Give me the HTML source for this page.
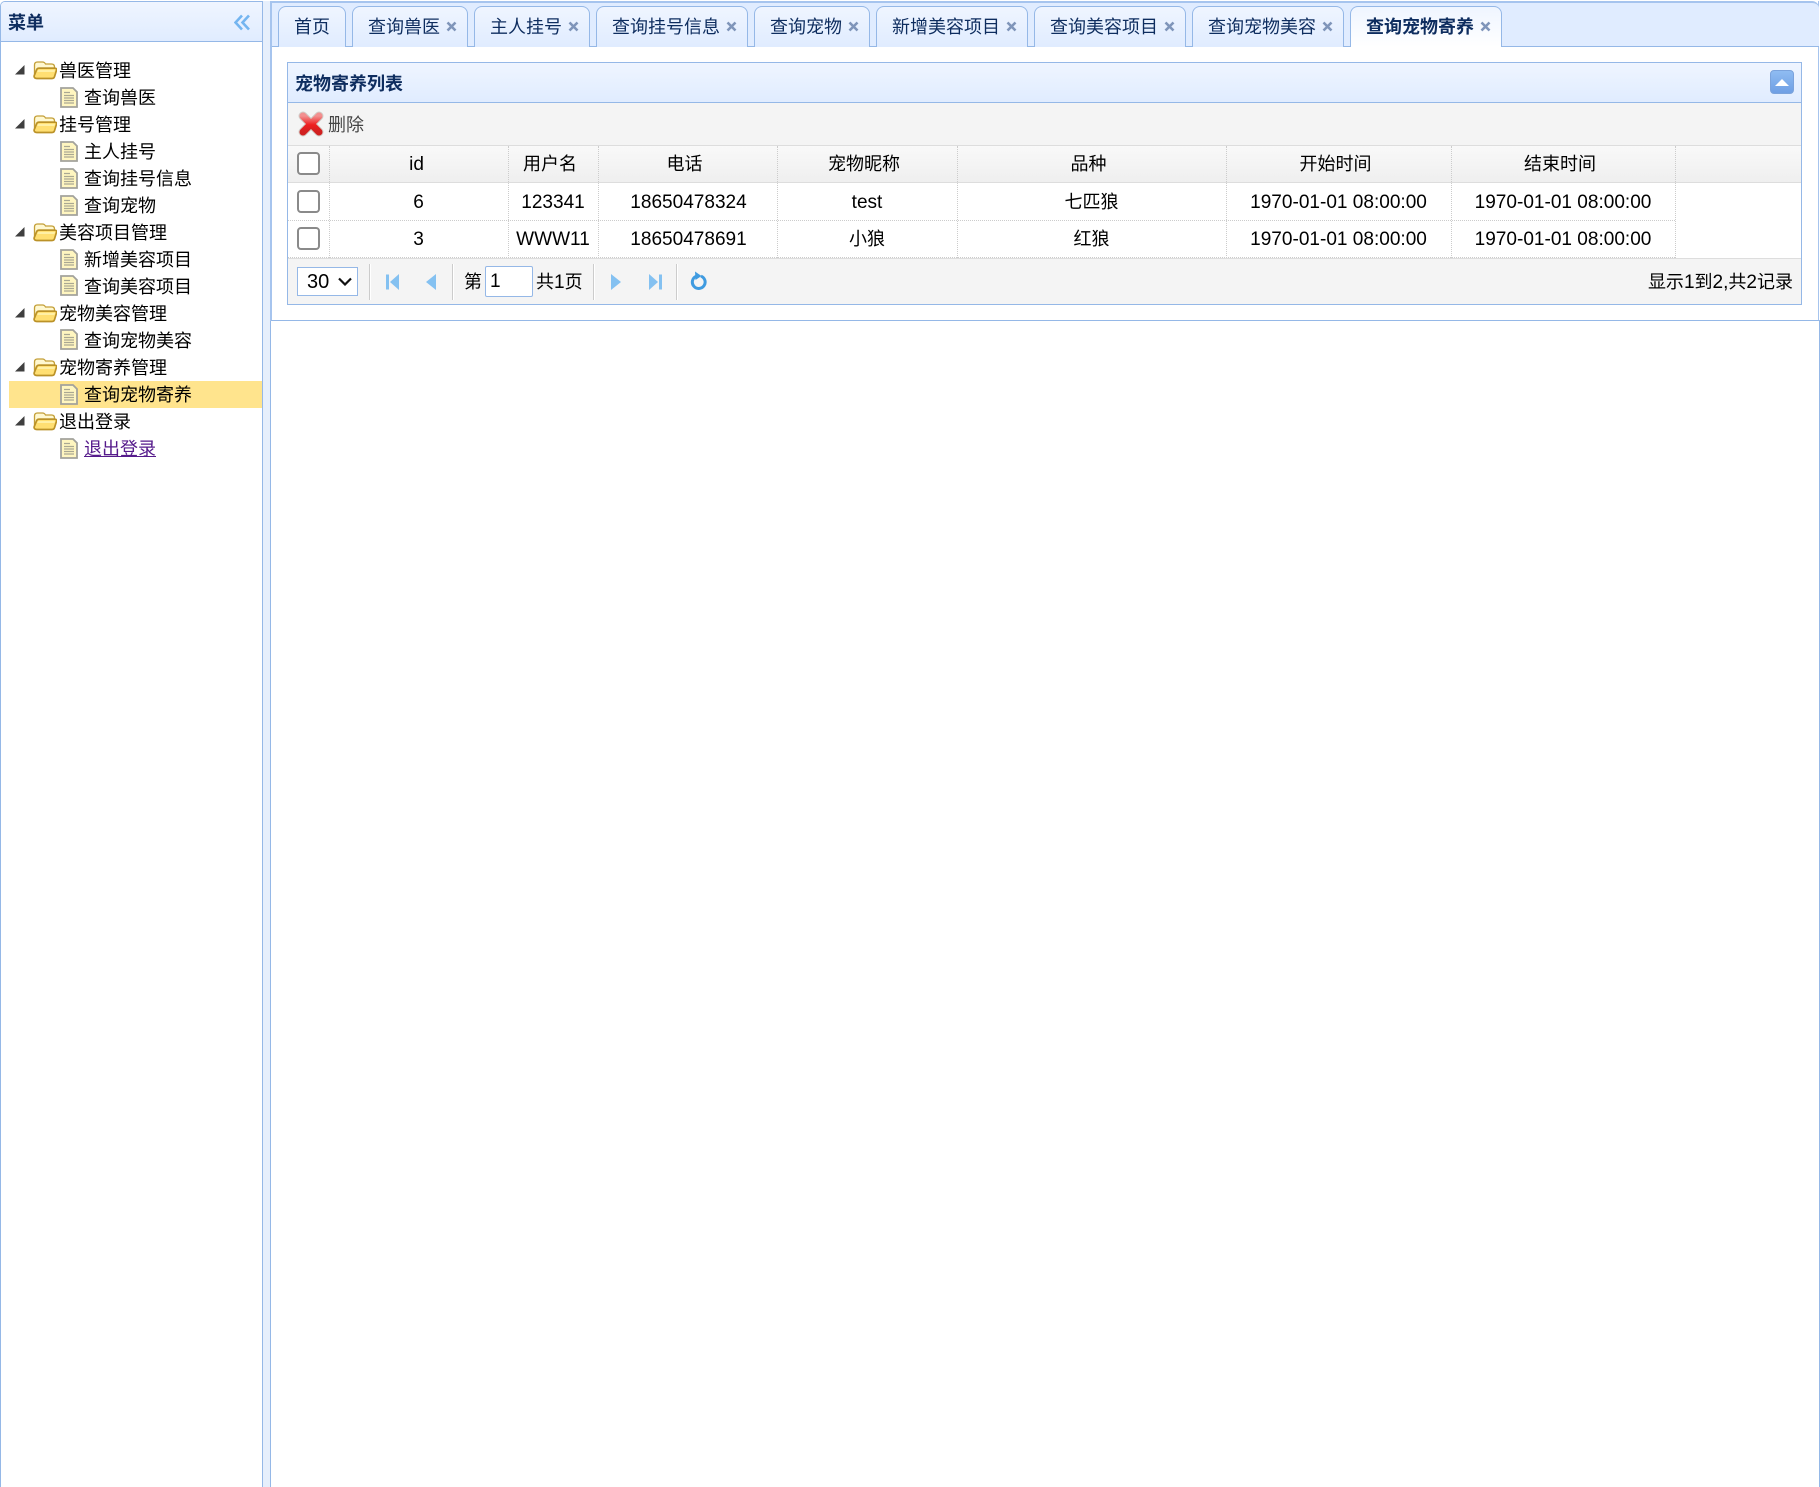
<!DOCTYPE html>
<html lang="zh"><head><meta charset="utf-8"><title>宠物寄养</title>
<style>
html,body{margin:0;padding:0;background:#fff;}
body{position:relative;width:1820px;height:1487px;overflow:hidden;font-family:"Liberation Sans","Noto Sans CJK SC",sans-serif;font-size:18px;color:#000;}
.a{position:absolute;box-sizing:border-box;}
.t{position:absolute;white-space:nowrap;line-height:27px;height:27px;}
.c{position:absolute;white-space:nowrap;text-align:center;line-height:27px;height:27px;}
.l{font-size:19.05px;}
.tab{position:absolute;top:6px;height:41px;box-sizing:border-box;border:1px solid #95b8e7;border-bottom:0;border-radius:8px 8px 0 0;background:linear-gradient(#eff5ff,#e0ecff);color:#0e2d5f;line-height:41px;padding-left:15px;white-space:nowrap;}
.tab svg{position:absolute;right:10px;top:14px;}
.tab.on{background:linear-gradient(#eff5ff,#fff);font-weight:bold;height:41px;}
.vd{position:absolute;width:0;border-left:1px dotted #ccc;}
.hd{position:absolute;height:0;border-top:1px dotted #ccc;}
.cb{position:absolute;left:297px;width:23px;height:23px;box-sizing:border-box;border:2px solid #8a8a8a;border-radius:4px;background:#fff;}
.sep{position:absolute;top:264px;width:1px;height:36px;background:#ccc;border-right:1px solid #fff;}
svg{position:absolute;display:block;}
</style></head><body>
<svg width="0" height="0" style="position:absolute"><defs>
<symbol id="fold" viewBox="0 0 24 20">
<path d="M1.500 15V5q0-3 3-3h5q2 0 3 2h6q3 0 3 3v1H6q-2 0-2.500 2L1.500 16z" fill="#fff8d0" stroke="#c39f38" stroke-width="1.300"/>
<path d="M1.500 17.500q-.8-1 0-2.500l2-5q.6-1.800 2.500-1.800h16q2 0 1.500 2l-2 6.500q-.5 1.800-2.500 1.800H4q-1.800 0-2.500-1z" fill="#ffdf72" stroke="#bb9228" stroke-width="1.700"/>
<path d="M5 10h17l-.6 2H4.300z" fill="#fff0a6"/>
</symbol>
<symbol id="file" viewBox="0 0 18 21">
<path d="M1 1h12l4 4v15H1z" fill="#fff6c0" stroke="#a2a29c" stroke-width="1.800"/>
<path d="M4 5.500h6M4 8.500h10M4 11h10M4 13.500h10M4 16h10" stroke="#aaa892" stroke-width="1.300"/>
</symbol>
<symbol id="tri" viewBox="0 0 10 10"><path d="M0 9.500L9.500 0v9.500z" fill="#3f3f3f"/></symbol>
<symbol id="x" viewBox="0 0 11 11"><path d="M1.500 1.500l8 8M9.500 1.500l-8 8" stroke="#7f95ba" stroke-width="2.600" fill="none"/></symbol>
</defs></svg>

<!-- left panel -->
<div class="a" style="left:0;top:1px;width:263px;height:1486px;border:1px solid #95b8e7;border-bottom:0;border-radius:5px 0 0 0;background:#fff;"></div>
<div class="a" style="left:1px;top:2px;width:261px;height:39px;background:linear-gradient(#eff5ff,#e0ecff);border-radius:4px 0 0 0;"></div>
<div class="a" style="left:1px;top:41px;width:261px;height:1px;background:#95b8e7;"></div>
<div class="t" style="left:8px;top:10px;font-weight:bold;color:#0e2d5f;">菜单</div>
<svg style="left:234px;top:14px" width="16" height="17" viewBox="0 0 16 17"><path d="M8 1.500L1.500 8.500 8 15.500M15 1.500L8.500 8.500 15 15.500" fill="none" stroke="#74b5f0" stroke-width="2.600"/></svg>

<div class="a" style="left:9px;top:381px;width:253px;height:27px;background:#ffe48d;"></div>

<!-- tree groups -->
<svg style="left:15px;top:65px" width="10" height="10"><use href="#tri"/></svg><svg style="left:33px;top:60px" width="24" height="20"><use href="#fold"/></svg><div class="t" style="left:59px;top:58px">兽医管理</div>
<svg style="left:60px;top:87px" width="18" height="21"><use href="#file"/></svg><div class="t" style="left:84px;top:85px">查询兽医</div>
<svg style="left:15px;top:119px" width="10" height="10"><use href="#tri"/></svg><svg style="left:33px;top:114px" width="24" height="20"><use href="#fold"/></svg><div class="t" style="left:59px;top:112px">挂号管理</div>
<svg style="left:60px;top:141px" width="18" height="21"><use href="#file"/></svg><div class="t" style="left:84px;top:139px">主人挂号</div>
<svg style="left:60px;top:168px" width="18" height="21"><use href="#file"/></svg><div class="t" style="left:84px;top:166px">查询挂号信息</div>
<svg style="left:60px;top:195px" width="18" height="21"><use href="#file"/></svg><div class="t" style="left:84px;top:193px">查询宠物</div>
<svg style="left:15px;top:227px" width="10" height="10"><use href="#tri"/></svg><svg style="left:33px;top:222px" width="24" height="20"><use href="#fold"/></svg><div class="t" style="left:59px;top:220px">美容项目管理</div>
<svg style="left:60px;top:249px" width="18" height="21"><use href="#file"/></svg><div class="t" style="left:84px;top:247px">新增美容项目</div>
<svg style="left:60px;top:275px" width="18" height="21"><use href="#file"/></svg><div class="t" style="left:84px;top:274px">查询美容项目</div>
<svg style="left:15px;top:308px" width="10" height="10"><use href="#tri"/></svg><svg style="left:33px;top:303px" width="24" height="20"><use href="#fold"/></svg><div class="t" style="left:59px;top:301px">宠物美容管理</div>
<svg style="left:60px;top:329px" width="18" height="21"><use href="#file"/></svg><div class="t" style="left:84px;top:328px">查询宠物美容</div>
<svg style="left:15px;top:362px" width="10" height="10"><use href="#tri"/></svg><svg style="left:33px;top:357px" width="24" height="20"><use href="#fold"/></svg><div class="t" style="left:59px;top:355px">宠物寄养管理</div>
<svg style="left:60px;top:384px" width="18" height="21"><use href="#file"/></svg><div class="t" style="left:84px;top:382px">查询宠物寄养</div>
<svg style="left:15px;top:416px" width="10" height="10"><use href="#tri"/></svg><svg style="left:33px;top:411px" width="24" height="20"><use href="#fold"/></svg><div class="t" style="left:59px;top:409px">退出登录</div>
<svg style="left:60px;top:438px" width="18" height="21"><use href="#file"/></svg><div class="t" style="left:84px;top:436px;color:#551a8b;text-decoration:underline;">退出登录</div>

<!-- gutter -->
<div class="a" style="left:263px;top:1px;width:7px;height:1486px;background:#e6effc;"></div>

<!-- right panel -->
<div class="a" style="left:270px;top:1px;width:1550px;height:1486px;background:#fff;border-left:1px solid #95b8e7;border-right:1px solid #95b8e7;"></div>
<div class="a" style="left:270px;top:1px;width:2px;height:320px;background:#a6c4ee;"></div>
<div class="a" style="left:1818px;top:1px;width:2px;height:320px;background:#a6c4ee;"></div>
<div class="a" style="left:1819px;top:0;width:1px;height:320px;background:#fff;"></div>
<div class="a" style="left:272px;top:1px;width:1547px;height:46px;background:#e0ecff;border-top:2px solid #a6c4ee;border-bottom:1px solid #95b8e7;border-radius:0 7px 0 0;"></div>
<div class="a" style="left:271px;top:320px;width:1549px;height:1px;background:#95b8e7;"></div>

<div class="tab" style="left:278px;width:68px;">首页</div>
<div class="tab" style="left:352px;width:116px;">查询兽医<svg width="11" height="11"><use href="#x"/></svg></div>
<div class="tab" style="left:474px;width:116px;">主人挂号<svg width="11" height="11"><use href="#x"/></svg></div>
<div class="tab" style="left:596px;width:152px;">查询挂号信息<svg width="11" height="11"><use href="#x"/></svg></div>
<div class="tab" style="left:754px;width:116px;">查询宠物<svg width="11" height="11"><use href="#x"/></svg></div>
<div class="tab" style="left:876px;width:152px;">新增美容项目<svg width="11" height="11"><use href="#x"/></svg></div>
<div class="tab" style="left:1034px;width:152px;">查询美容项目<svg width="11" height="11"><use href="#x"/></svg></div>
<div class="tab" style="left:1192px;width:152px;">查询宠物美容<svg width="11" height="11"><use href="#x"/></svg></div>
<div class="tab on" style="left:1350px;width:152px;">查询宠物寄养<svg width="11" height="11"><use href="#x"/></svg></div>

<!-- datagrid panel -->
<div class="a" style="left:287px;top:62px;width:1515px;height:243px;border:1px solid #95b8e7;background:#f4f4f4;"></div>
<div class="a" style="left:288px;top:63px;width:1513px;height:40px;background:linear-gradient(#eff5ff,#e0ecff);border-bottom:1px solid #95b8e7;"></div>
<div class="t" style="left:295px;top:71px;font-weight:bold;color:#0e2d5f;">宠物寄养列表</div>
<div class="a" style="left:1770px;top:70px;width:24px;height:24px;border:1px solid #7ba3dc;border-radius:4px;background:linear-gradient(#8fbcf2,#6f9fe4);"></div>
<svg style="left:1775px;top:79px" width="14" height="7"><path d="M0 7L7 0l7 7z" fill="#fff"/></svg>

<!-- toolbar -->
<svg style="left:298px;top:111px" width="26" height="26" viewBox="0 0 26 26">
<defs><linearGradient id="rx" x1="0" y1="0" x2="0" y2="1"><stop offset="0" stop-color="#f29090"/><stop offset=".55" stop-color="#ee2020"/><stop offset="1" stop-color="#d02020"/></linearGradient></defs>
<path d="M5 5l16 16M21 5L5 21" stroke="#b9b0a8" stroke-width="9" stroke-linecap="round" fill="none" opacity=".6"/>
<path d="M5 5l16 16M21 5L5 21" stroke="url(#rx)" stroke-width="7" stroke-linecap="round" fill="none"/>
</svg>
<div class="t" style="left:328px;top:112px;color:#444;">删除</div>
<div class="a" style="left:288px;top:145px;width:1513px;height:1px;background:#ddd;"></div>

<!-- grid header -->
<div class="a" style="left:288px;top:146px;width:1513px;height:36px;background:linear-gradient(#f9f9f9,#efefef);"></div>
<div class="a" style="left:288px;top:182px;width:1513px;height:1px;background:#ddd;"></div>
<div class="a" style="left:288px;top:183px;width:1513px;height:75px;background:#fff;"></div>
<div class="hd" style="left:288px;top:220px;width:1387px;"></div>
<div class="hd" style="left:288px;top:257px;width:1387px;"></div>
<div class="a" style="left:288px;top:258px;width:1513px;height:1px;background:#ddd;"></div>

<div class="vd" style="left:329px;top:146px;height:112px;"></div>
<div class="vd" style="left:508px;top:146px;height:112px;"></div>
<div class="vd" style="left:598px;top:146px;height:112px;"></div>
<div class="vd" style="left:777px;top:146px;height:112px;"></div>
<div class="vd" style="left:957px;top:146px;height:112px;"></div>
<div class="vd" style="left:1226px;top:146px;height:112px;"></div>
<div class="vd" style="left:1451px;top:146px;height:112px;"></div>
<div class="vd" style="left:1675px;top:146px;height:112px;"></div>

<div class="cb" style="top:152px"></div>
<div class="cb" style="top:190px"></div>
<div class="cb" style="top:227px"></div>

<!-- header text -->
<div class="c l" style="left:327px;width:179px;top:151px">id</div>
<div class="c" style="left:505px;width:90px;top:151px">用户名</div>
<div class="c" style="left:595px;width:179px;top:151px">电话</div>
<div class="c" style="left:774px;width:180px;top:151px">宠物昵称</div>
<div class="c" style="left:954px;width:269px;top:151px">品种</div>
<div class="c" style="left:1223px;width:225px;top:151px">开始时间</div>
<div class="c" style="left:1448px;width:224px;top:151px">结束时间</div>

<!-- row 1 -->
<div class="c l" style="left:329px;width:179px;top:189px">6</div>
<div class="c l" style="left:508px;width:90px;top:189px">123341</div>
<div class="c l" style="left:599px;width:179px;top:189px">18650478324</div>
<div class="c l" style="left:777px;width:180px;top:189px">test</div>
<div class="c" style="left:957px;width:269px;top:189px">七匹狼</div>
<div class="c l" style="left:1226px;width:225px;top:189px">1970-01-01 08:00:00</div>
<div class="c l" style="left:1451px;width:224px;top:189px">1970-01-01 08:00:00</div>
<!-- row 2 -->
<div class="c l" style="left:329px;width:179px;top:226px">3</div>
<div class="c l" style="left:508px;width:90px;top:226px">WWW11</div>
<div class="c l" style="left:599px;width:179px;top:226px">18650478691</div>
<div class="c" style="left:777px;width:180px;top:226px">小狼</div>
<div class="c" style="left:957px;width:269px;top:226px">红狼</div>
<div class="c l" style="left:1226px;width:225px;top:226px">1970-01-01 08:00:00</div>
<div class="c l" style="left:1451px;width:224px;top:226px">1970-01-01 08:00:00</div>

<!-- pagination -->
<div class="a" style="left:297px;top:267px;width:61px;height:29px;border:1px solid #95b8e7;background:#fff;"></div>
<div class="t" style="left:307px;top:269px;font-size:20px;">30</div>
<svg style="left:338px;top:277px" width="14" height="9"><path d="M1 1.500l6 6 6-6" fill="none" stroke="#111" stroke-width="2.200"/></svg>
<div class="sep" style="left:369px"></div>
<div class="sep" style="left:452px"></div>
<div class="sep" style="left:593px"></div>
<div class="sep" style="left:676px"></div>
<svg style="left:386px;top:274px" width="13" height="16"><path d="M0 0.500h3v15H0zM13 0v16L4 8z" fill="#84c1f1"/></svg>
<svg style="left:426px;top:274px" width="10" height="16"><path d="M10 0v16L0 8z" fill="#84c1f1"/></svg>
<svg style="left:611px;top:274px" width="10" height="16"><path d="M0 0v16L10 8z" fill="#84c1f1"/></svg>
<svg style="left:649px;top:274px" width="13" height="16"><path d="M0 0v16L9 8zM10 0.500h3v15h-3z" fill="#84c1f1"/></svg>
<svg style="left:690px;top:271px" width="18" height="19" viewBox="0 0 18 19"><path d="M11 5.100A6.400 6.400 0 1 1 6 5.300" fill="none" stroke="#3f9be0" stroke-width="3"/><path d="M5 0.500l6.500 4.500L5.500 9z" fill="#3f9be0"/></svg>
<div class="t" style="left:464px;top:269px;">第</div>
<div class="a" style="left:485px;top:266px;width:48px;height:31px;border:1px solid #95b8e7;border-radius:2px;background:#fff;"></div>
<div class="t l" style="left:490px;top:268px;">1</div>
<div class="t" style="left:536px;top:269px;">共<span class="l">1</span>页</div>
<div class="t" style="right:27px;top:269px;">显示<span class="l">1</span>到<span class="l">2,</span>共<span class="l">2</span>记录</div>
</body></html>
